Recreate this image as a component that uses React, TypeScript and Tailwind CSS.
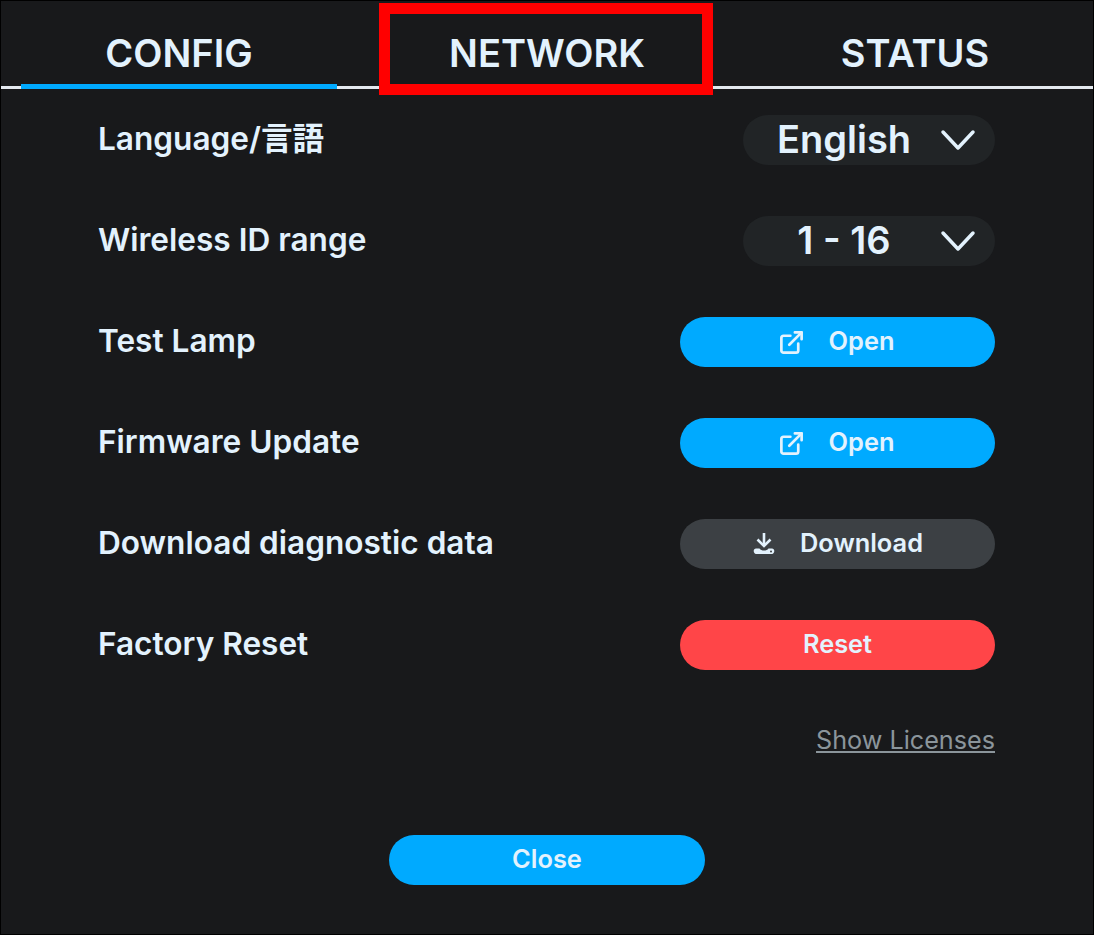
import { ExternalLink } from 'lucide-react';

const DownloadIcon = () => (
    <svg width="24" height="24" viewBox="0 0 24 24" fill="none" className="shrink-0">
        <path d="M12 1V12.500" stroke="currentColor" strokeWidth="2.600" />
        <path d="M5.500 7.500l6.500 6.500 6.500-6.500" stroke="currentColor" strokeWidth="2.600" />
        <path
            d="M4 16.500h3.500c1 1.500 2.500 2 4.500 2s3.500-.5 4.500-2H20c1.300 0 2.300 1.100 2.300 2.500s-1 3-2.300 3H4c-1.300 0-2.300-1.500-2.300-3s1-2.500 2.300-2.500z"
            fill="currentColor"
        />
        <circle cx="19" cy="19.600" r="1" fill="#3c4044" />
    </svg>
);

const Chevron = () => (
    <svg width="36" height="24" viewBox="0 0 36 24" fill="none" className="shrink-0">
        <path d="M3 4l15 16L33 4" stroke="currentColor" strokeWidth="3.500" strokeLinecap="round" strokeLinejoin="round" />
    </svg>
);

const Row = ({ label, children }: { label: string; children: React.ReactNode }) => (
    <div className="flex h-[50px] items-center justify-between">
        <span className="-ml-px pb-[2px] text-[31.6px] font-semibold leading-none text-[#e3f2fd]">{label}</span>
        {children}
    </div>
);

const Select = ({ value }: { value: string }) => (
    <div className="flex h-[50px] w-[252px] items-center rounded-full bg-[#212426] pl-[5px] pr-[19px] text-[#e3f2fd]">
        <span className="flex-1 pb-[2px] text-center text-[38px] font-semibold leading-none">{value}</span>
        <Chevron />
    </div>
);

const Button = ({
    color,
    icon,
    children,
}: {
    color: string;
    icon?: React.ReactNode;
    children: string;
}) => (
    <button className={`flex h-[50px] w-[315px] items-center justify-center gap-[24px] rounded-full text-[25.400px] font-semibold leading-none text-[#e3f2fd] ${color}`}>
        {icon}
        <span className="pb-[2px]">{children}</span>
    </button>
);

const App = () => {
    return (
        <div
            className="relative h-[935px] w-[1094px] overflow-hidden border border-black bg-[#18191b]"
            style={{ fontFamily: 'Inter, "Noto Sans CJK JP", sans-serif' }}
        >
            <div className="flex h-[88px] justify-between border-b-[3px] border-[#e3e9ef] px-[20px]">
                {['CONFIG', 'NETWORK', 'STATUS'].map((tab, i) => (
                    <div
                        key={tab}
                        className={`-mb-[3px] flex h-[88px] w-[316px] items-center justify-center border-b-[5px] pt-[20px] text-[38px] font-semibold leading-none text-[#e3f2fd] ${i === 0 ? 'border-[#00aaff]' : 'border-transparent'}`}
                    >
                        {tab}
                    </div>
                ))}
            </div>

            <div className="flex flex-col gap-[51px] px-[98px] pt-[26px]">
                <Row label="Language/言語">
                    <Select value="English" />
                </Row>
                <Row label="Wireless ID range">
                    <Select value="1 - 16" />
                </Row>
                <Row label="Test Lamp">
                    <Button color="bg-[#00aaff] pr-[3px]" icon={<ExternalLink size={27} strokeWidth={2.4} />}>
                        Open
                    </Button>
                </Row>
                <Row label="Firmware Update">
                    <Button color="bg-[#00aaff] pr-[3px]" icon={<ExternalLink size={27} strokeWidth={2.4} />}>
                        Open
                    </Button>
                </Row>
                <Row label="Download diagnostic data">
                    <Button color="bg-[#3c4044]" icon={<DownloadIcon />}>
                        Download
                    </Button>
                </Row>
                <Row label="Factory Reset">
                    <Button color="bg-[#ff4548]">Reset</Button>
                </Row>
            </div>

            <div className="mt-[58px] flex justify-end pr-[98px]">
                <a className="text-[25.200px] leading-none text-[#8b959b] underline">Show Licenses</a>
            </div>

            <div className="mt-[82px] flex justify-center">
                <button className="flex h-[50px] w-[316px] items-center justify-center rounded-full bg-[#00aaff] pb-[4px] text-[25.400px] font-semibold leading-none text-[#e3f2fd]">
                    Close
                </button>
            </div>

            {/* annotation drawn over the screenshot */}
            <div className="absolute left-[378px] top-[2px] h-[92px] w-[334px] border-[11px] border-[#ff0000]" />
        </div>
    );
};

export default App;
